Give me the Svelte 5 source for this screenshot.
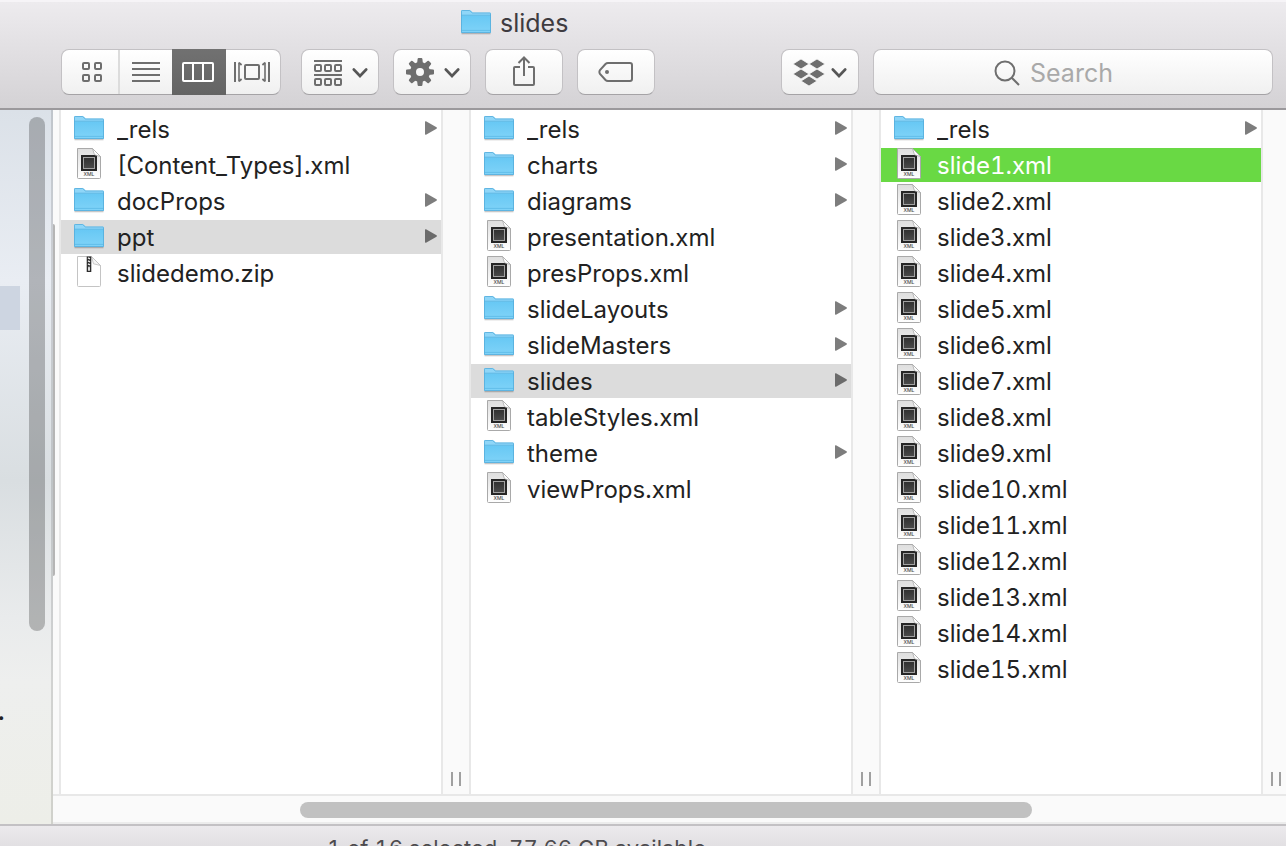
<script>
  const folder = (name, selected = false) => ({ name, kind: 'folder', selected });
  const xml = (name, selected = false) => ({ name, kind: 'xml', selected });

  const columns = [
    {
      label: 'slidedemo',
      items: [
        folder('_rels'),
        xml('[Content_Types].xml'),
        folder('docProps'),
        folder('ppt', true),
        { name: 'slidedemo.zip', kind: 'zip', selected: false }
      ]
    },
    {
      label: 'ppt',
      items: [
        folder('_rels'),
        folder('charts'),
        folder('diagrams'),
        xml('presentation.xml'),
        xml('presProps.xml'),
        folder('slideLayouts'),
        folder('slideMasters'),
        folder('slides', true),
        xml('tableStyles.xml'),
        folder('theme'),
        xml('viewProps.xml')
      ]
    },
    {
      label: 'slides',
      items: [
        folder('_rels'),
        ...Array.from({ length: 15 }, (_, i) => xml(`slide${i + 1}.xml`, i === 0))
      ]
    }
  ];
  const active = columns.length - 1;
</script>

{#snippet folderIcon()}
  <svg class="icon" width="32" height="28" viewBox="0 0 32 28" aria-hidden="true">
    <path d="M1.5 25.6H30.5" stroke="#000" stroke-opacity=".22" stroke-width="1.4" />
    <path d="M1 3.2Q1 2 2.2 2H9.6Q10.4 2 11 2.7L13 4.6H29.8Q31 4.6 31 5.8V24.5H1Z" fill="#8fd6f8" />
    <path d="M1 7.4H31V24Q31 25 30 25H2Q1 25 1 24Z" fill="url(#folderFace)" />
    <path d="M1 7.2H31" stroke="#5fb9e4" stroke-width="1" />
    <path d="M1.5 22.4H30.5" stroke="#62bfe9" stroke-width="1" />
    <path d="M1.5 24.5V3.2Q1.5 2.5 2.2 2.5H9.6L12.4 5H29.8Q30.5 5 30.5 5.8V24.5Z" fill="none" stroke="#55addb" stroke-width="1" stroke-opacity=".8" />
  </svg>
{/snippet}

{#snippet xmlIcon()}
  <svg class="icon" width="32" height="32" viewBox="0 1 32 32" aria-hidden="true">
    <path d="M4.5 1.5H19.5L27.5 9.5V30.5Q27.5 31.5 26.5 31.5H5.5Q4.5 31.5 4.5 30.5Z" fill="url(#paper)" stroke="#a9a9a9" />
    <rect x="8" y="8" width="16" height="16" fill="#262626" />
    <rect x="10.5" y="10.5" width="11" height="11" fill="url(#chip)" stroke="#a2a2a2" />
    <path d="M19.5 1.5L27.5 9.5L21.5 7.8Z" fill="#fff" stroke="#a9a9a9" stroke-width=".8" />
    <text x="16" y="29" text-anchor="middle" font-size="5" font-weight="500" fill="#4b4b4b">XML</text>
  </svg>
{/snippet}

{#snippet zipIcon()}
  <svg class="icon" width="32" height="32" viewBox="0 1 32 32" aria-hidden="true">
    <path d="M4.5 1.5H18.5L27.5 10.5V30.5Q27.5 31.5 26.5 31.5H5.5Q4.5 31.5 4.5 30.5Z" fill="#fff" stroke="#c4c4c4" />
    <path d="M18.5 1.5L27.5 10.5L20.5 8.8Z" fill="#f4f4f4" stroke="#bdbdbd" stroke-width=".8" />
    <path d="M16 1.5V17" stroke="#2c2c2c" stroke-width="4.6" />
    <path d="M15 2.8L17 3.8M15 5.8L17 6.8M15 8.8L17 9.8" stroke="#eee" stroke-width="1.4" />
    <rect x="15" y="11.5" width="2" height="4.5" rx="1" fill="#ddd" />
  </svg>
{/snippet}

{#snippet chevron()}
  <svg class="chevron" width="16" height="12" viewBox="0 0 16 12" aria-hidden="true">
    <path d="M1.8 2.5L8 9L14.2 2.5" fill="none" stroke="#565656" stroke-width="2.6" stroke-linecap="round" stroke-linejoin="miter" />
  </svg>
{/snippet}

<svg class="defs" width="0" height="0" aria-hidden="true">
  <defs>
    <linearGradient id="folderFace" x1="0" y1="0" x2="0" y2="1">
      <stop offset="0" stop-color="#67c8f4" />
      <stop offset="1" stop-color="#80d3f8" />
    </linearGradient>
    <linearGradient id="paper" x1="0" y1="0" x2="0" y2="1">
      <stop offset="0" stop-color="#dedede" />
      <stop offset="1" stop-color="#fff" />
    </linearGradient>
    <linearGradient id="chip" x1="0" y1="0" x2="0" y2="1">
      <stop offset="0" stop-color="#303030" />
      <stop offset="1" stop-color="#4a4a4a" />
    </linearGradient>
  </defs>
</svg>

<div class="window">
  <header>
    <h1>
      {@render folderIcon()}
      <span>slides</span>
    </h1>
    <div class="toolbar">
      <div class="segments" role="group" aria-label="View">
        <button class="seg wide" aria-label="Icon view">
          <svg width="22" height="22" viewBox="0 0 22 22" fill="none" stroke="#6e6e6e" stroke-width="2">
            <rect x="2" y="2" width="6" height="6" rx="1" /><rect x="14" y="2" width="6" height="6" rx="1" />
            <rect x="2" y="14" width="6" height="6" rx="1" /><rect x="14" y="14" width="6" height="6" rx="1" />
          </svg>
        </button>
        <button class="seg list" aria-label="List view">
          <svg width="28" height="20" viewBox="0 0 28 20" stroke="#6e6e6e" stroke-width="2">
            <path d="M0 1H28M0 7H28M0 13H28M0 19H28" />
          </svg>
        </button>
        <button class="seg on" aria-label="Column view" aria-pressed="true">
          <svg width="32" height="20" viewBox="0 0 32 20" fill="none" stroke="#fff" stroke-width="2">
            <rect x="1" y="1" width="30" height="18" rx="1" /><path d="M11 1V19M21 1V19" />
          </svg>
        </button>
        <button class="seg flow" aria-label="Cover Flow view">
          <svg width="36" height="20" viewBox="0 0 36 20" fill="none" stroke="#6e6e6e">
            <path d="M1 0V20M35 0V20" stroke-width="2" />
            <path d="M5 .5V19.5M31 .5V19.5" stroke-width="1.6" />
            <path d="M5 .8L7.6 3M5 19.2L7.6 17M31 .8L28.4 3M31 19.2L28.4 17" stroke-width="1.8" />
            <rect x="11" y="3" width="14" height="14" rx="1" stroke-width="2" />
          </svg>
        </button>
      </div>

      <button class="tool menu" aria-label="Arrange items">
        <svg width="28" height="28" viewBox="0 0 28 28" fill="none" stroke="#6e6e6e" stroke-width="2">
          <path d="M0 3H28M0 17H28" />
          <rect x="1" y="7" width="6" height="6" rx="1" /><rect x="11" y="7" width="6" height="6" rx="1" /><rect x="21" y="7" width="6" height="6" rx="1" />
          <rect x="1" y="21" width="6" height="6" rx="1" /><rect x="11" y="21" width="6" height="6" rx="1" /><rect x="21" y="21" width="6" height="6" rx="1" />
        </svg>
        {@render chevron()}
      </button>

      <button class="tool menu" aria-label="Actions">
        <svg width="28" height="28" viewBox="-14 -14 28 28">
          <circle r="7" fill="none" stroke="#6e6e6e" stroke-width="6" />
          {#each [0, 45, 90, 135, 180, 225, 270, 315] as angle}
            <path d="M-3 -8L-2.4 -13Q-2.3 -14 -1.4 -14H1.4Q2.3 -14 2.4 -13L3 -8Z" fill="#6e6e6e" transform="rotate({angle})" />
          {/each}
        </svg>
        {@render chevron()}
      </button>

      <button class="tool" aria-label="Share">
        <svg width="22" height="32" viewBox="0 0 22 32" fill="none" stroke="#6e6e6e" stroke-width="2">
          <path d="M7 11H2Q1 11 1 12V28Q1 29 2 29H20Q21 29 21 28V12Q21 11 20 11H15" />
          <path d="M11 20V1.5M5.500 7L11 1.5L16.500 7" />
        </svg>
      </button>

      <button class="tool" aria-label="Edit tags">
        <svg width="36" height="22" viewBox="0 0 36 22" fill="none" stroke="#6e6e6e" stroke-width="2">
          <path d="M10 2H32Q34 2 34 4V18Q34 20 32 20H10Q8.500 20 7.500 19L2 13Q.8 11 2 9L7.500 3Q8.500 2 10 2Z" />
          <circle cx="9" cy="11" r="2" fill="#6e6e6e" stroke="none" />
        </svg>
      </button>

      <button class="tool last" aria-label="Dropbox">
        <svg width="32" height="28" viewBox="0 0 32 28" fill="#6e6e6e">
          <path d="M8 1L16 6L8 11L0 6ZM24 1L32 6L24 11L16 6ZM8 11L16 16L8 21L0 16ZM24 11L32 16L24 21L16 16ZM16 18L24 23L16 28L8 23Z" stroke="#fafafa" stroke-width=".8" />
        </svg>
        {@render chevron()}
      </button>

      <label class="search">
        <svg width="26" height="26" viewBox="0 0 26 26" fill="none" stroke="#6e6e6e" stroke-width="2">
          <circle cx="11" cy="11" r="9.500" /><path d="M17.500 17.500L25 25" />
        </svg>
        <input type="search" placeholder="Search" aria-label="Search" />
      </label>
    </div>
  </header>

  <div class="body">
    <aside>
      <span class="patch"></span>
      <span class="thumb"></span>
      <span class="stray">.</span>
    </aside>

    <main>
      <div class="columns">
        <div class="edge"><span></span></div>
        {#each columns as column, index}
          <ul aria-label={column.label}>
            {#each column.items as item}
              <li class:selected={item.selected} class:active={item.selected && index === active}>
                {#if item.kind === 'folder'}
                  {@render folderIcon()}
                {:else if item.kind === 'xml'}
                  {@render xmlIcon()}
                {:else}
                  {@render zipIcon()}
                {/if}
                <span class="name">{item.name}</span>
                {#if item.kind === 'folder'}
                  <svg class="arrow" width="12" height="14" viewBox="0 0 12 14" aria-hidden="true">
                    <path d="M0 1Q0 0 1 .3L11.500 6.300Q12.300 7 11.500 7.700L1 13.700Q0 14 0 13Z" />
                  </svg>
                {/if}
              </li>
            {/each}
          </ul>
          <div class="gutter" class:end={index === active}><span class="grip"></span></div>
        {/each}
      </div>
      <div class="track"><span></span></div>
    </main>
  </div>

  <footer>1 of 16 selected, 77.66 GB available</footer>
</div>

<style>
  :global(body) {
    margin: 0;
  }

  .defs {
    position: absolute;
  }

  .window {
    display: flex;
    flex-direction: column;
    height: 100vh;
    overflow: hidden;
    background: #fff;
    color: #222;
    font: 24px/34px Inter, 'Liberation Sans', sans-serif;
    font-variant-numeric: tabular-nums;
  }

  .window * {
    box-sizing: border-box;
  }

  header {
    flex: none;
    padding: 4px 13px 13px 61px;
    border-top: 2px solid #f6f4f7;
    border-bottom: 2px solid #9b999c;
    background: linear-gradient(#edebee, #d4d2d5);
  }

  h1 {
    display: flex;
    align-items: center;
    gap: 8px;
    height: 34px;
    margin: 0 0 9px 399px;
    font-size: 25px;
    font-weight: 400;
    line-height: 34px;
    color: #3e3b40;
  }

  h1 .icon {
    margin-bottom: 2px;
  }

  .toolbar {
    display: flex;
    gap: 14px;
  }

  button {
    display: flex;
    align-items: center;
    justify-content: center;
    padding: 0;
    border: 0;
    background: none;
  }

  .segments,
  .tool,
  .search {
    flex: none;
    height: 46px;
    border: 1px solid #c3c1c4;
    border-bottom-color: #a5a3a6;
    border-radius: 8px;
    background: linear-gradient(#fff, #f0f0f0);
  }

  .segments {
    display: flex;
    width: 220px;
    margin-right: 6px;
  }

  .seg {
    flex: 1;
  }

  .seg.wide {
    flex: none;
    width: 58px;
    padding-left: 4px;
    border-right: 2px solid #dcdcdc;
  }

  .seg.list {
    flex: none;
    width: 52px;
  }

  .seg.on {
    flex: none;
    width: 54px;
    margin: -1px 0;
    padding-right: 2px;
    background: linear-gradient(#717171, #646464);
  }

  .seg.flow {
    padding-right: 2px;
  }

  .tool {
    width: 78px;
  }

  .tool.menu {
    gap: 10px;
    padding-left: 2px;
  }

  .chevron {
    margin-top: 2px;
  }

  .tool.last {
    gap: 6px;
    margin-left: auto;
  }

  .search {
    display: flex;
    align-items: center;
    justify-content: center;
    gap: 10px;
    width: 400px;
  }

  .search svg {
    margin-top: 2px;
  }

  .search input {
    width: 110px;
    height: 34px;
    margin: 2px 12px 0 0;
    padding: 0;
    border: 0;
    outline: 0;
    background: none;
    font: inherit;
    font-size: 25px;
    appearance: none;
  }

  .search input::placeholder {
    color: #a9a9a9;
    opacity: 1;
  }

  .body {
    display: flex;
    flex: 1;
    min-height: 0;
  }

  aside {
    position: relative;
    flex: none;
    width: 53px;
    border-right: 2px solid rgb(0 0 0 / 12%);
    background: linear-gradient(#dbe1e8, #e9edf3 24%, #d9dee1 52%, #e9ebec 71%, #eeefee 80%, #edeee8) border-box;
  }

  .patch {
    position: absolute;
    top: 176px;
    left: 0;
    width: 20px;
    height: 44px;
    background: #cdd5e1;
  }

  .thumb {
    position: absolute;
    top: 1%;
    right: 6px;
    width: 16px;
    height: 72%;
    border-radius: 8px;
    background: rgb(0 0 0 / 24%);
  }

  .stray {
    position: absolute;
    top: 585px;
    left: -2px;
    font-weight: 600;
  }

  main {
    display: flex;
    flex: 1;
    flex-direction: column;
    min-width: 0;
  }

  .columns {
    display: flex;
    flex: 1;
    min-height: 0;
  }

  .edge {
    flex: none;
    width: 8px;
    padding-top: 114px;
    border-right: 2px solid #e8e8e8;
    background: #fafafa;
  }

  .edge span {
    display: block;
    width: 2px;
    height: 352px;
    border-radius: 0 2px 2px 0;
    background: #b5b5b5;
  }

  ul {
    display: flex;
    flex: 1;
    flex-direction: column;
    gap: 2px;
    min-width: 0;
    margin: 0;
    padding: 2px 0 0;
    list-style: none;
  }

  li {
    display: flex;
    align-items: center;
    height: 34px;
    padding: 0 4px 0 12px;
  }

  .icon {
    flex: none;
  }

  li .icon,
  .arrow {
    margin-bottom: 2px;
  }

  .name {
    flex: 1;
    min-width: 0;
    margin-left: 12px;
    padding-top: 2px;
    overflow: hidden;
    white-space: nowrap;
  }

  .arrow {
    flex: none;
    fill: #7d7d7d;
  }

  .selected {
    background: #dcdcdc;
  }

  .selected .arrow {
    fill: #6b6b6b;
  }

  .active {
    background: #69d944;
    color: #fff;
  }

  .gutter {
    display: flex;
    flex: none;
    align-items: flex-end;
    width: 30px;
    padding: 0 0 8px 8px;
    border: solid #e8e8e8;
    border-width: 0 2px;
    background: #fafafa;
  }

  .gutter.end {
    width: 25px;
    border-right: 0;
  }

  .grip {
    width: 10px;
    height: 14px;
    border: solid #a0a0a0;
    border-width: 0 2px;
  }

  .track {
    flex: none;
    height: 30px;
    padding: 6px 0;
    border-top: 2px solid #e8e8e8;
    border-bottom: 2px solid #ececec;
    background: #fafafa;
  }

  .track span {
    display: block;
    width: 59.4%;
    height: 16px;
    margin-left: 20%;
    border-radius: 8px;
    background: #c1c1c1;
  }

  footer {
    flex: none;
    height: 22px;
    padding: 5px 0 0 327px;
    overflow: hidden;
    border-top: 2px solid #c3c1c4;
    background: linear-gradient(#eceaed, #e2e0e3);
    font-size: 22px;
    line-height: 34px;
    white-space: nowrap;
    color: #4d4b4e;
  }
</style>
